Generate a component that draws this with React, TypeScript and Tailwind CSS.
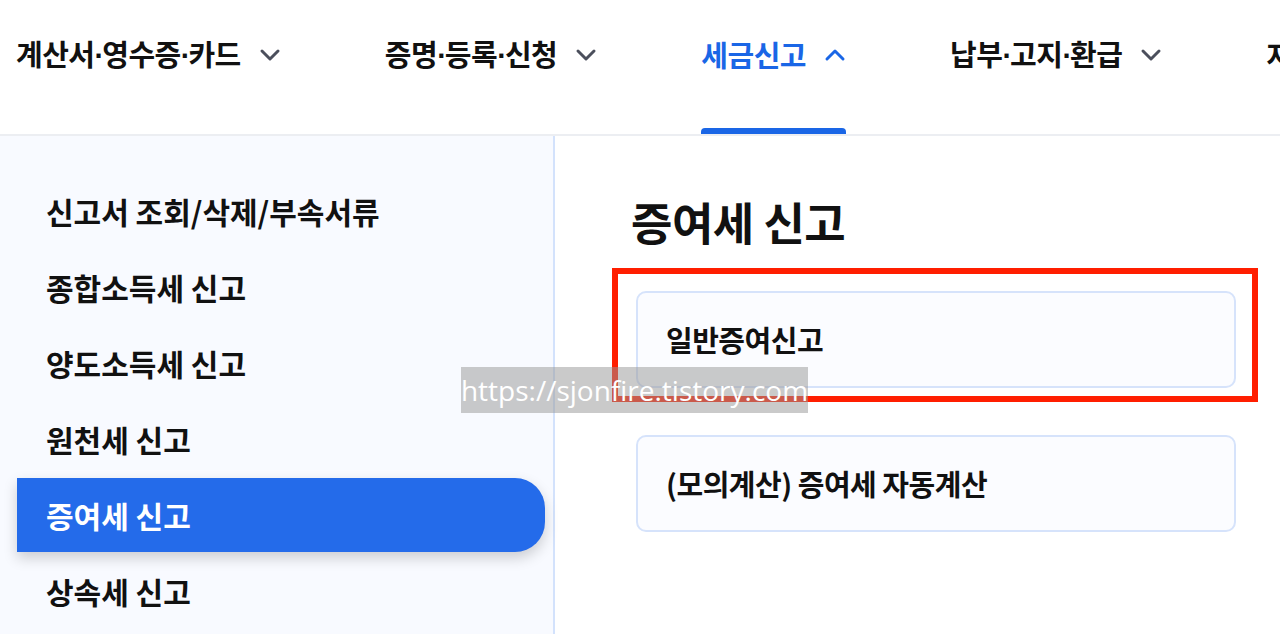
import React from "react";

const FONT = '"Noto Sans CJK KR", "Noto Sans", sans-serif';

const navItems = [
  { label: ["계산서", "영수증", "카드"], active: false },
  { label: ["증명", "등록", "신청"], active: false },
  { label: ["세금신고"], active: true },
  { label: ["납부", "고지", "환급"], active: false },
  { label: ["자료제출"], active: false },
];

const sideItems = [
  "신고서 조회/삭제/부속서류",
  "종합소득세 신고",
  "양도소득세 신고",
  "원천세 신고",
  "증여세 신고",
  "상속세 신고",
];

function Chevron({ up, color }: { up?: boolean; color: string }) {
  return (
    <svg width="22" height="14" viewBox="0 0 22 14" fill="none">
      <path
        d={up ? "M3 11 L11 3 L19 11" : "M3 3 L11 11 L19 3"}
        stroke={color}
        strokeWidth="3"
        strokeLinecap="round"
        strokeLinejoin="round"
      />
    </svg>
  );
}

export default function App() {
  return (
    <div
      className="relative w-[1280px] h-[634px] overflow-hidden bg-white text-[#111]"
      style={{ fontFamily: FONT }}
    >
      {/* top nav */}
      <header className="h-[136px] border-b-2 border-[#eceef2] flex items-start pl-[16px] gap-[104px] whitespace-nowrap">
        {navItems.map((item) => (
          <div key={item.label.join()} className="relative h-[134px] flex items-center shrink-0">
            <div className="flex items-center gap-[18px] -mt-[24px]">
              <span
                className={`text-[29px] font-bold tracking-[-0.5px] ${
                  item.active ? "text-[#1a66e6]" : "text-[#111]"
                }`}
              >
                {item.label.map((part, i) => (
                  <React.Fragment key={part}>
                    {i > 0 && (
                      <span className="tracking-[-2px]" style={{ fontFamily: '"Liberation Sans", sans-serif' }}>
                        ·
                      </span>
                    )}
                    {part}
                  </React.Fragment>
                ))}
              </span>
              <Chevron up={item.active} color={item.active ? "#1a66e6" : "#4b4f5c"} />
            </div>
            {item.active && (
              <span className="absolute left-0 right-0 bottom-0 h-[6px] rounded-t-[4px] bg-[#1a66e6]" />
            )}
          </div>
        ))}
      </header>

      <div className="flex h-[498px]">
        {/* sidebar */}
        <aside className="w-[555px] shrink-0 bg-[#f8faff] border-r-2 border-[#d3e2fc] pt-[37px]">
          {sideItems.map((label) => {
            const active = label === "증여세 신고";
            return (
              <div
                key={label}
                className={`ml-[17px] mr-[8px] flex items-center pl-[29px] text-[30px] font-bold ${
                  active
                    ? "bg-[#246bea] text-white rounded-r-[30px] h-[74px] my-[1px] shadow-[0_6px_14px_rgba(0,0,0,0.18)]"
                    : "h-[76px] text-[#111]"
                }`}
              >
                {label}
              </div>
            );
          })}
        </aside>

        {/* content */}
        <main className="flex-1 pl-[76px] pt-[54px]">
          <h1 className="text-[45px] font-bold tracking-[-0.5px] leading-[64px]">증여세 신고</h1>
        </main>
      </div>

      {/* cards */}
      <div className="absolute left-[636px] top-[291px] w-[600px] flex flex-col gap-[47px]">
        <div className="h-[97px] rounded-[10px] border-2 border-[#d6e3fb] bg-[#fbfcff] flex items-center pl-[28px] text-[29px] font-bold tracking-[-0.5px]">
          일반증여신고
        </div>
        <div className="h-[97px] rounded-[10px] border-2 border-[#d6e3fb] bg-[#fbfcff] flex items-center pl-[28px] text-[29px] font-bold tracking-[-0.5px]">
          (모의계산) 증여세 자동계산
        </div>
      </div>

      {/* red annotation box */}
      <div className="absolute left-[612px] top-[268px] w-[646px] h-[134px] border-[6px] border-[#ff1e00]" />

      {/* watermark */}
      <div
        className="absolute left-[461px] top-[367px] w-[347px] h-[46px] bg-[rgba(150,150,150,0.5)] flex items-center justify-center text-white text-[28px]"
        style={{ fontFamily: '"Open Sans", "Noto Sans", sans-serif' }}
      >
        https://sjonfire.tistory.com
      </div>
    </div>
  );
}
